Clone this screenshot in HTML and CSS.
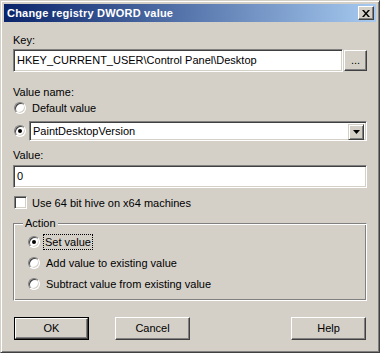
FILE: index.html
```html
<!DOCTYPE html>
<html lang="en">
<head>
    <meta charset="UTF-8">
    <title>Change registry DWORD value</title>
    <link rel="stylesheet" href="styles.css">
</head>
<body>
    <div class="window">
        <div class="titlebar">
            <span class="title">Change registry DWORD value</span>
            <span class="close-btn">
                <svg width="8" height="7" viewBox="0 0 8 7">
                    <path d="M0 0h2l2 2.5L6 0h2L5 3.5 8 7H6L4 4.5 2 7H0l3-3.5z" fill="#000"/>
                </svg>
            </span>
        </div>
        <div class="content">
            <div class="label key-label">Key:</div>
            <div class="key-row">
                <div class="field key-field">HKEY_CURRENT_USER\Control Panel\Desktop</div>
                <div class="button browse">...</div>
            </div>

            <div class="label name-label">Value name:</div>
            <div class="option first-option">
                <span class="radio"></span>
                <span class="option-text">Default value</span>
            </div>
            <div class="option combo-option">
                <span class="radio checked"></span>
                <div class="field combo">
                    <span class="combo-text">PaintDesktopVersion</span>
                    <span class="combo-arrow">
                        <svg width="7" height="4" viewBox="0 0 7 4"><path d="M0 0h7L3.5 4z" fill="#000"/></svg>
                    </span>
                </div>
            </div>

            <div class="label value-label">Value:</div>
            <div class="field value-field">0</div>

            <div class="option check-option">
                <span class="checkbox"></span>
                <span class="option-text">Use 64 bit hive on x64 machines</span>
            </div>

            <div class="group">
                <span class="legend">Action</span>
                <div class="option group-option">
                    <span class="radio checked"></span>
                    <span class="option-text focused">Set value</span>
                </div>
                <div class="option group-option">
                    <span class="radio"></span>
                    <span class="option-text">Add value to existing value</span>
                </div>
                <div class="option group-option">
                    <span class="radio"></span>
                    <span class="option-text">Subtract value from existing value</span>
                </div>
            </div>

            <div class="buttons">
                <div class="default-wrap"><div class="button push">OK</div></div>
                <div class="button push cancel">Cancel</div>
                <div class="spacer"></div>
                <div class="button push help">Help</div>
            </div>
        </div>
    </div>
</body>
</html>
```

FILE: styles.css
```css
body {
    margin: 0;
    background: #d4d0c8;
    font-family: "Liberation Sans", Arial, sans-serif;
    font-size: 11px;
    color: #000;
}
.window {
    width: 380px;
    height: 353px;
    box-sizing: border-box;
    background: #d4d0c8;
    border: 1px solid;
    border-color: #d4d0c8 #404040 #404040 #d4d0c8;
    box-shadow: inset 1px 1px #fff, inset -1px -1px #808080;
    padding: 3px;
}
.titlebar {
    height: 18px;
    background: linear-gradient(to right, #0a246a, #a6caf0);
    display: flex;
    align-items: center;
    justify-content: space-between;
    padding: 0 2px;
}
.title {
    color: #fff;
    font-weight: bold;
    padding-left: 1px;
    letter-spacing: 0.2px;
}
.close-btn {
    width: 16px;
    height: 14px;
    box-sizing: border-box;
    background: #d4d0c8;
    border: 1px solid;
    border-color: #fff #404040 #404040 #fff;
    box-shadow: inset -1px -1px #808080;
    display: flex;
    align-items: center;
    justify-content: center;
    padding-right: 1px;
}
.content {
    padding: 0 9px;
}
.label {
    height: 13px;
    line-height: 13px;
}
.key-label {
    margin-top: 12px;
}
.key-row {
    display: flex;
    align-items: center;
    margin-top: 2px;
    height: 23px;
}
.field {
    box-sizing: border-box;
    background: #fff;
    border: 1px solid;
    border-color: #808080 #fff #fff #808080;
    box-shadow: inset 1px 1px #404040, inset -1px -1px #d4d0c8;
    height: 23px;
    line-height: 21px;
    padding-left: 3px;
    white-space: nowrap;
}
.key-field {
    width: 330px;
}
.button {
    box-sizing: border-box;
    background: #d4d0c8;
    border: 1px solid;
    border-color: #fff #404040 #404040 #fff;
    box-shadow: inset -1px -1px #808080;
    text-align: center;
}
.browse {
    width: 23px;
    height: 21px;
    line-height: 19px;
    margin-left: 1px;
}
.name-label {
    margin-top: 14px;
}
.option {
    display: flex;
    align-items: center;
}
.first-option {
    margin-top: 2px;
    height: 14px;
}
.radio {
    width: 12px;
    height: 12px;
    box-sizing: border-box;
    border-radius: 50%;
    background: #fff;
    border: 1px solid;
    border-color: #808080 #fff #fff #808080;
    box-shadow: inset 1px 1px #404040, inset -1px -1px #d4d0c8;
    margin-left: 1px;
    margin-right: 6px;
    position: relative;
    flex: none;
}
.radio.checked::after {
    content: "";
    position: absolute;
    left: 3px;
    top: 3px;
    width: 4px;
    height: 4px;
    border-radius: 50%;
    background: #000;
}
.combo-option {
    margin-top: 5px;
    height: 21px;
}
.combo {
    flex: 1;
    height: 20px;
    line-height: 18px;
    margin-left: -3px;
    display: flex;
    justify-content: space-between;
    padding: 0 2px 0 3px;
}
.combo-arrow {
    width: 16px;
    height: 16px;
    margin-top: 2px;
    box-sizing: border-box;
    background: #d4d0c8;
    border: 1px solid;
    border-color: #d4d0c8 #404040 #404040 #d4d0c8;
    box-shadow: inset 1px 1px #fff, inset -1px -1px #808080;
    display: flex;
    align-items: center;
    justify-content: center;
}
.value-label {
    margin-top: 8px;
}
.value-field {
    margin-top: 3px;
}
.check-option {
    margin-top: 8px;
    height: 13px;
}
.checkbox {
    width: 13px;
    height: 13px;
    box-sizing: border-box;
    background: #fff;
    border: 1px solid;
    border-color: #808080 #fff #fff #808080;
    box-shadow: inset 1px 1px #404040, inset -1px -1px #d4d0c8;
    margin-left: 1px;
    margin-right: 5px;
}

/* etched group box */
.group {
    position: relative;
    margin-top: 14px;
    height: 78px;
    box-sizing: border-box;
    border: 1px solid #808080;
    border-right-color: #fff;
    border-bottom-color: #fff;
    box-shadow: inset 1px 1px #fff, inset -1px -1px #808080;
    padding: 7px 0 0 13px;
}
.legend {
    position: absolute;
    top: -7px;
    left: 9px;
    padding: 0 2px;
    line-height: 13px;
    background: #d4d0c8;
}
.group-option {
    height: 21px;
}
.focused {
    outline: 1px dotted #000;
    padding: 1px;
    margin-left: -2px;
}
.buttons {
    display: flex;
    margin-top: 16px;
}
.push {
    width: 75px;
    height: 23px;
    line-height: 21px;
}
.default-wrap {
    border: 1px solid #000;
    width: 75px;
    height: 23px;
    box-sizing: border-box;
    margin-left: 1px;
}
.default-wrap .push {
    width: 73px;
    height: 21px;
    line-height: 19px;
}
.cancel {
    margin-left: 26px;
}
.spacer {
    flex: 1;
}
.help {
    margin-right: 1px;
}
```
